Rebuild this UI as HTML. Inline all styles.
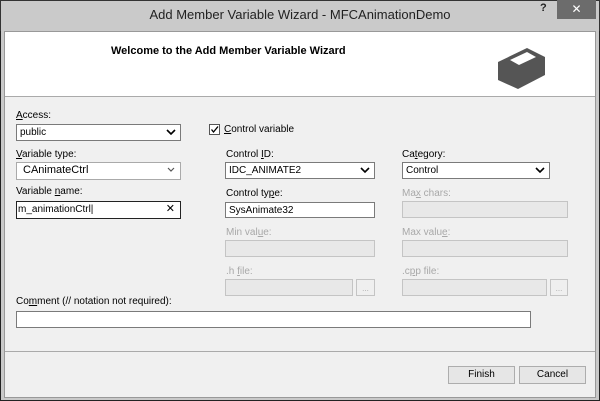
<!DOCTYPE html>
<html><head><style>
*{box-sizing:border-box;margin:0;padding:0}
body{width:600px;height:401px;overflow:hidden;background:#fff;font-family:"Liberation Sans",sans-serif;font-size:10px;color:#000;position:relative}
.a{position:absolute}
.lbl{position:absolute;font-size:10px}
.dis{color:#a8a8a8}
.box{position:absolute;background:#fff;border:1px solid #7a7a7a;font-size:10px;padding-left:3px;line-height:15px}
.dbox{position:absolute;background:#e8e8e8;border:1px solid #c4c4c4}
.btn{position:absolute;background:#e6e6e6;border:1px solid #adadad;text-align:center;line-height:16px;font-size:10px}
.chev{position:absolute;right:4px;top:3px}
</style></head><body>
<div class="a" style="left:0;top:0;width:600px;height:401px;border:1px solid #222;background:#c9c9c9"></div>
<div class="a" style="left:0;top:0;width:600px;height:31px;background:#cacaca;border:1px solid #333;border-bottom:none"></div>
<div class="a" style="left:0;top:7px;width:600px;text-align:center;font-size:13px;color:#222">Add Member Variable Wizard - MFCAnimationDemo</div>
<div class="a" style="left:540px;top:2px;font-size:11px;font-weight:bold;color:#222">?</div>
<div class="a" style="left:557px;top:0;width:39px;height:19px;background:#6c6c6c;color:#fff;text-align:center;font-size:12px;line-height:18px">✕</div>
<div class="a" style="left:4px;top:31px;width:592px;height:367px;background:#f0f0f0;border:1px solid #999"></div>
<div class="a" style="left:5px;top:32px;width:590px;height:65px;background:#fff;border-bottom:1px solid #aaa"></div>
<div class="a" style="left:111px;top:45px;font-size:11px;font-weight:bold">Welcome to the Add Member Variable Wizard</div>
<svg class="a" style="left:495px;top:45px" width="55" height="48"><polygon points="3,17 32,3 50,12 50,30 23,44 3,35" fill="#555"/><polygon points="15,15 32,7 41,12 24,20" fill="#fff"/></svg>

<div class="lbl" style="left:16px;top:110px"><u>A</u>ccess:</div>
<div class="box" style="left:16px;top:124px;width:165px;height:17px">public<svg class="chev" width="10" height="8"><path d="M1,2 L5,6 L9,2" stroke="#000" stroke-width="1.6" fill="none"/></svg></div>
<div class="a" style="left:209px;top:124px;width:11px;height:11px;border:1px solid #555;background:#fff"><svg width="9" height="9" style="position:absolute;left:0;top:0"><path d="M1.5,4.5 L3.5,7 L8,1.5" stroke="#000" stroke-width="1.3" fill="none"/></svg></div>
<div class="lbl" style="left:224px;top:124px"><u>C</u>ontrol variable</div>

<div class="lbl" style="left:16px;top:149px"><u>V</u>ariable type:</div>
<div class="box" style="left:16px;top:162px;width:165px;height:18px;border-color:#aaa;padding-left:6px;font-size:11px">CAnimateCtrl<svg class="chev" width="10" height="8"><path d="M2,2 L5,5 L8,2" stroke="#555" stroke-width="1.2" fill="none"/></svg></div>
<div class="lbl" style="left:16px;top:186px">Variable <u>n</u>ame:</div>
<div class="box" style="left:16px;top:201px;width:165px;height:18px;border-color:#222;padding-left:1px">m_animationCtrl|<span style="position:absolute;right:5px;top:0;font-size:11px">✕</span></div>

<div class="lbl" style="left:226px;top:149px">Control <u>I</u>D:</div>
<div class="box" style="left:225px;top:162px;width:150px;height:17px">IDC_ANIMATE2<svg class="chev" width="10" height="8"><path d="M1,2 L5,6 L9,2" stroke="#000" stroke-width="1.6" fill="none"/></svg></div>
<div class="lbl" style="left:226px;top:188px">Control ty<u>p</u>e:</div>
<div class="box" style="left:225px;top:202px;width:150px;height:16px">SysAnimate32</div>
<div class="lbl dis" style="left:226px;top:227px">Min val<u>u</u>e:</div>
<div class="dbox" style="left:225px;top:240px;width:150px;height:17px"></div>
<div class="lbl dis" style="left:226px;top:266px">.h <u>f</u>ile:</div>
<div class="dbox" style="left:225px;top:279px;width:128px;height:17px"></div>
<div class="dbox" style="left:356px;top:279px;width:19px;height:17px;background:#efefef;color:#aaa;font-size:8px;text-align:center;line-height:18px">...</div>

<div class="lbl" style="left:402px;top:149px">Ca<u>t</u>egory:</div>
<div class="box" style="left:402px;top:162px;width:148px;height:17px">Control<svg class="chev" width="10" height="8"><path d="M1,2 L5,6 L9,2" stroke="#000" stroke-width="1.6" fill="none"/></svg></div>
<div class="lbl dis" style="left:402px;top:188px">Ma<u>x</u> chars:</div>
<div class="dbox" style="left:402px;top:201px;width:166px;height:17px"></div>
<div class="lbl dis" style="left:402px;top:227px">Max valu<u>e</u>:</div>
<div class="dbox" style="left:402px;top:240px;width:166px;height:17px"></div>
<div class="lbl dis" style="left:402px;top:266px">.c<u>p</u>p file:</div>
<div class="dbox" style="left:402px;top:279px;width:145px;height:17px"></div>
<div class="dbox" style="left:550px;top:279px;width:18px;height:17px;background:#efefef;color:#aaa;font-size:8px;text-align:center;line-height:18px">...</div>

<div class="lbl" style="left:16px;top:296px">Co<u>m</u>ment (// notation not required):</div>
<div class="box" style="left:16px;top:311px;width:515px;height:17px"></div>
<div class="a" style="left:5px;top:351px;width:590px;height:1px;background:#aaa"></div>
<div class="btn" style="left:448px;top:366px;width:67px;height:18px">Finish</div>
<div class="btn" style="left:519px;top:366px;width:67px;height:18px">Cancel</div>
</body></html>
